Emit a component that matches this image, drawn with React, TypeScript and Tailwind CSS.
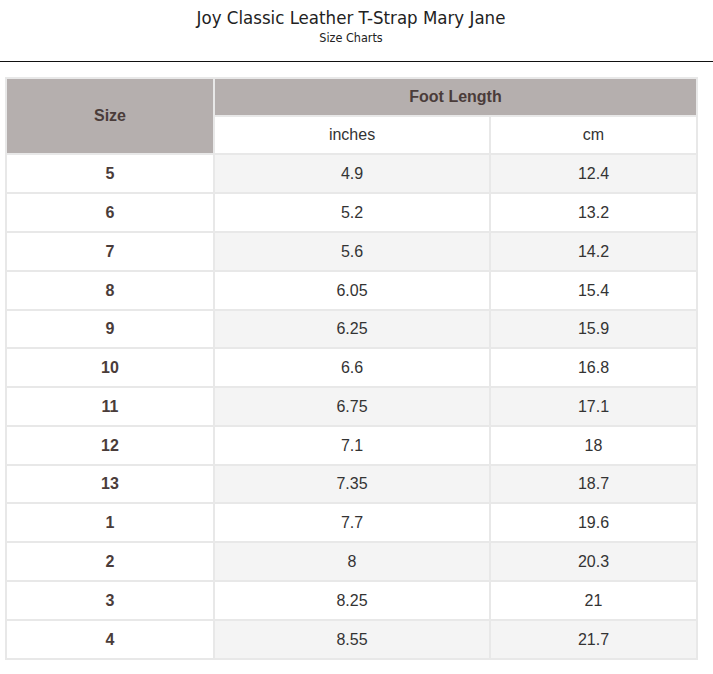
const rows: [string, string, string][] = [
  ['5', '4.9', '12.4'],
  ['6', '5.2', '13.2'],
  ['7', '5.6', '14.2'],
  ['8', '6.05', '15.4'],
  ['9', '6.25', '15.9'],
  ['10', '6.6', '16.8'],
  ['11', '6.75', '17.1'],
  ['12', '7.1', '18'],
  ['13', '7.35', '18.7'],
  ['1', '7.7', '19.6'],
  ['2', '8', '20.3'],
  ['3', '8.25', '21'],
  ['4', '8.55', '21.7'],
];

export default function App() {
  return (
    <div className="w-[713px] min-h-[674px] bg-white">
      <div className="w-[702px] pt-[7px] text-center text-[#222] [font-family:'DejaVu_Sans_Condensed','DejaVu_Sans',sans-serif] [font-stretch:condensed]">
        <h1 className="text-[18.5px] leading-[21px]">Joy Classic Leather T-Strap Mary Jane</h1>
        <p className="mt-[3px] text-[12.5px] leading-[14px]">Size Charts</p>
      </div>
      <hr className="mt-[16px] border-t border-[#111]" />

      <div className="ml-[5px] mt-[15px] grid w-[693px] grid-cols-[206px_274px_205px] gap-[2px] bg-[#e8e8e8] p-[2px] text-center text-[16px] text-[#333] [font-family:'Liberation_Sans',Arial,sans-serif]">
        <div className="row-span-2 flex items-center justify-center bg-[#b5afae] font-bold text-[#4a3c3a]">
          Size
        </div>
        <div className="col-span-2 flex h-[36px] items-center justify-center bg-[#b5afae] font-bold text-[#4a3c3a]">
          Foot Length
        </div>
        <div className="flex h-[36px] items-center justify-center bg-white">inches</div>
        <div className="flex h-[36px] items-center justify-center bg-white">cm</div>

        {rows.map(([size, inches, cm], i) => {
          const shade = i % 2 === 0 ? 'bg-[#f4f4f4]' : 'bg-white';
          // rows 9 and 13 come out a pixel shorter in the original
          const h = i === 4 || i === 8 ? 'h-[36px]' : 'h-[37px]';
          return (
            <div key={size} className="contents">
              <div className={`flex ${h} items-center justify-center bg-white font-bold text-[#4a3c3a]`}>
                {size}
              </div>
              <div className={`flex ${h} items-center justify-center ${shade}`}>{inches}</div>
              <div className={`flex ${h} items-center justify-center ${shade}`}>{cm}</div>
            </div>
          );
        })}
      </div>
    </div>
  );
}
